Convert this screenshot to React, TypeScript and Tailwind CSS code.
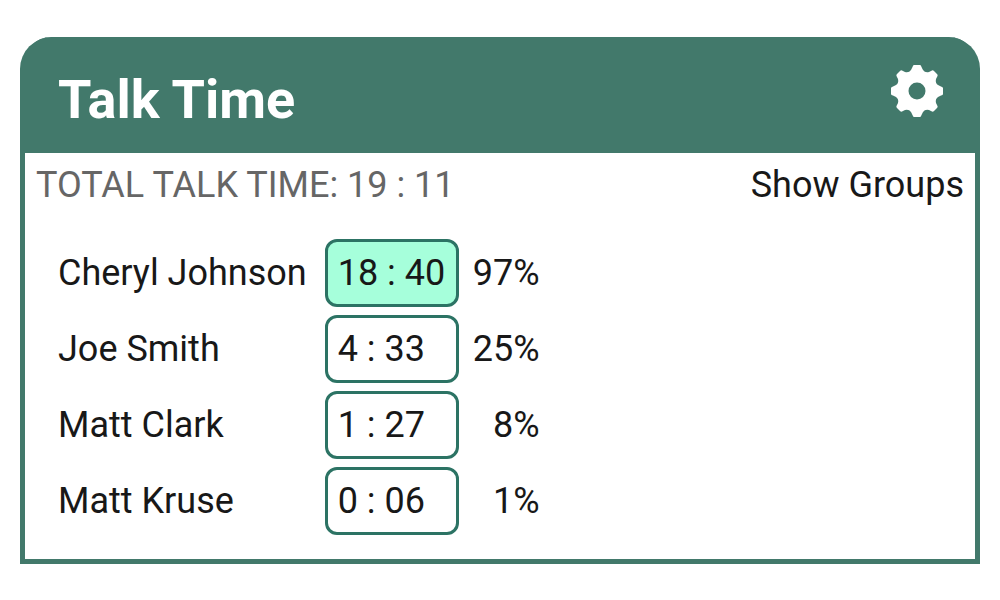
import React from "react";

const talkers = [
  { name: "Cheryl Johnson", time: "18 : 40", percent: "97%", active: true },
  { name: "Joe Smith", time: "4 : 33", percent: "25%", active: false },
  { name: "Matt Clark", time: "1 : 27", percent: "8%", active: false },
  { name: "Matt Kruse", time: "0 : 06", percent: "1%", active: false },
];

const GearIcon = () => (
  <svg viewBox="-26 -26 52 52" className="w-13 h-13" fill="currentColor" aria-hidden="true">
    <path
      fillRule="evenodd"
      d="M-3 -26H3Q4 -26 4.5 -24L6 -21Q8 -18 12 -19L15 -20.500Q16 -21 17 -20L20 -17Q21 -16 20.500 -15L19 -12Q18 -8 21 -6L24 -4.500Q26 -4 26 -3V3Q26 4 24 4.500L21 6Q18 8 19 12L20.500 15Q21 16 20 17L17 20Q16 21 15 20.500L12 19Q8 18 6 21L4.500 24Q4 26 3 26H-3Q-4 26 -4.500 24L-6 21Q-8 18 -12 19L-15 20.500Q-16 21 -17 20L-20 17Q-21 16 -20.500 15L-19 12Q-18 8 -21 6L-24 4.500Q-26 4 -26 3V-3Q-26 -4 -24 -4.500L-21 -6Q-18 -8 -19 -12L-20.500 -15Q-21 -16 -20 -17L-17 -20Q-16 -21 -15 -20.500L-12 -19Q-8 -18 -6 -21L-4.500 -24Q-4 -26 -3 -26ZM0 -8.5A8.5 8.5 0 1 0 0 8.5A8.5 8.5 0 1 0 0 -8.5Z"
    />
  </svg>
);

const App = () => {
  return (
    <main className="px-5 pt-[37px] pb-9 bg-white text-[#181818] text-[36px] leading-[44px] font-[Roboto,sans-serif]">
      <section className="border-[5px] border-t-0 border-[#42796b] rounded-t-[32px] bg-white">
        <header className="-mx-px flex items-start justify-between bg-[#42796b] rounded-t-[27px] pl-[34px] pr-[33px] pt-7 pb-[18px]">
          <h1 className="text-[54px] leading-[70px] font-bold text-white">Talk Time</h1>
          <button type="button" aria-label="Settings" className="text-white">
            <GearIcon />
          </button>
        </header>

        <div className="flex justify-between pl-[11px] pr-[11px] pt-[10px]">
          <p className="text-[#666]">TOTAL TALK TIME: 19 : 11</p>
          <button type="button">Show Groups</button>
        </div>

        <table className="mt-6 mb-4 ml-[33px] border-separate border-spacing-y-2">
          <tbody>
            {talkers.map((talker, i) => (
              <tr key={talker.name}>
                <th scope="row" className="p-0 pr-[18px] font-normal text-left">
                  <label htmlFor={`time-${i}`}>{talker.name}</label>
                </th>
                <td className="p-0">
                  <input
                    id={`time-${i}`}
                    type="text"
                    defaultValue={talker.time}
                    className={`block w-[134px] h-[68px] pl-[10px] border-[3px] border-[#2c7364] rounded-xl ${
                      talker.active ? "bg-[#a6ffdb]" : "bg-white"
                    }`}
                  />
                </td>
                <td className="p-0 pl-[14px] text-right">{talker.percent}</td>
              </tr>
            ))}
          </tbody>
        </table>
      </section>
    </main>
  );
};

export default App;
